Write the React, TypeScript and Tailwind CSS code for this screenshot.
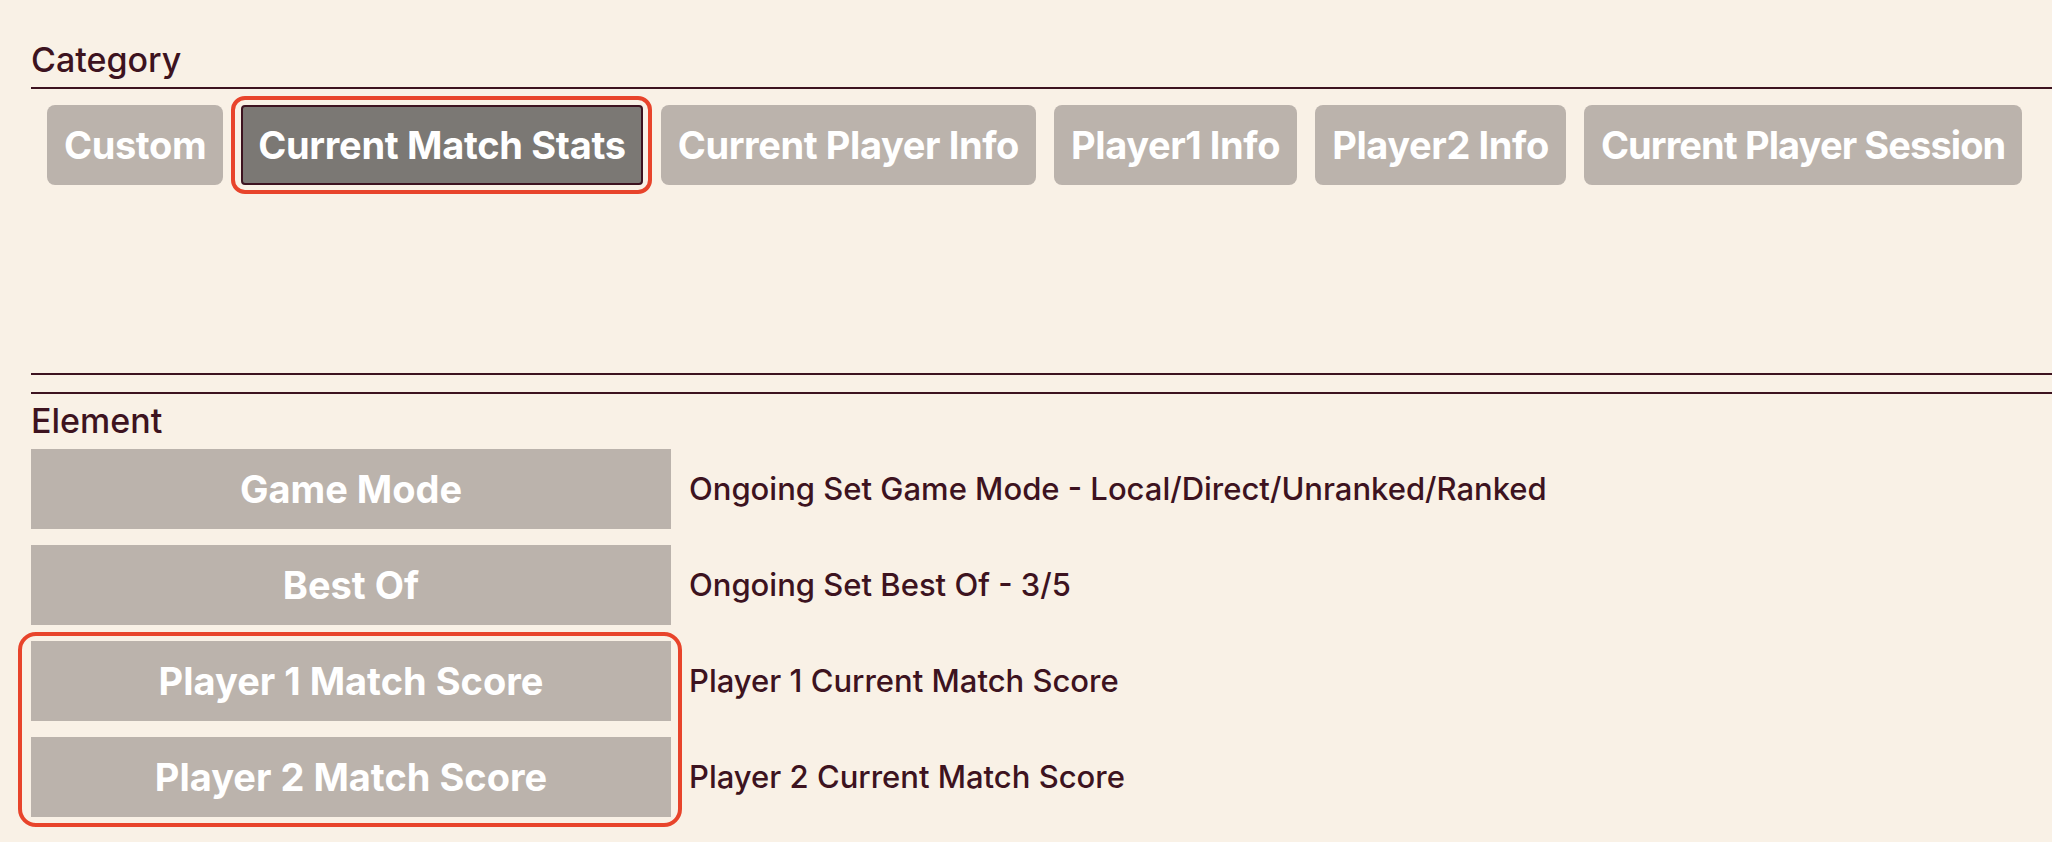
import React from "react";

const categories = [
  "Custom",
  "Current Match Stats",
  "Current Player Info",
  "Player1 Info",
  "Player2 Info",
  "Current Player Session",
];

const elements = [
  { name: "Game Mode", desc: "Ongoing Set Game Mode - Local/Direct/Unranked/Ranked" },
  { name: "Best Of", desc: "Ongoing Set Best Of - 3/5" },
];

const highlighted = [
  { name: "Player 1 Match Score", desc: "Player 1 Current Match Score" },
  { name: "Player 2 Match Score", desc: "Player 2 Current Match Score" },
];

function Row({ name, desc }: { name: string; desc: string }) {
  return (
    <div className="flex items-center gap-[18px]">
      <div className="flex h-[80px] w-[640px] shrink-0 items-center justify-center bg-[#bbb3ac] text-[38px] font-bold text-white">
        {name}
      </div>
      <div className="text-[31px] font-medium text-[#3d1320]">{desc}</div>
    </div>
  );
}

export default function App() {
  return (
    <div
      className="min-h-[842px] w-full bg-[#f9f1e6] pl-[31px] pt-[39px] text-[#3d1320]"
      style={{ fontFamily: "Inter, 'Noto Sans', sans-serif" }}
    >
      <div className="text-[34px] font-medium leading-[42px]">Category</div>
      <div className="mt-[6px] h-[288px] border-y-2 border-[#3d1320] pl-[16px] pt-[16px]">
        <div className="flex gap-[18px] whitespace-nowrap">
          {categories.map((c, i) =>
            i === 1 ? (
              <div key={c} className="relative">
                <div className="flex h-[80px] items-center rounded-[4px] border-2 border-[#3d1320] bg-[#7b7874] px-[15px] text-[38px] font-bold tracking-[-0.3px] text-white">
                  {c}
                </div>
                <span className="pointer-events-none absolute -bottom-[9px] -left-[10px] -right-[9px] -top-[9px] rounded-[14px] border-4 border-[#e8442b]" />
              </div>
            ) : (
              <div
                key={c}
                className={
                  i === 5
                    ? "flex h-[80px] items-center rounded-[8px] bg-[#bbb3ac] px-[17px] text-[38px] font-bold tracking-[-0.9px] text-white"
                    : "flex h-[80px] items-center rounded-[8px] bg-[#bbb3ac] px-[17px] text-[38px] font-bold tracking-[-0.4px] text-white"
                }
              >
                {c}
              </div>
            )
          )}
        </div>
      </div>
      <div className="mt-[17px] border-t-2 border-[#3d1320] pt-[6px]">
        <div className="text-[34px] font-medium leading-[42px]">Element</div>
        <div className="mt-[7px] flex flex-col gap-4">
          {elements.map((e) => (
            <Row key={e.name} {...e} />
          ))}
          <div className="relative flex flex-col gap-4">
            {highlighted.map((e) => (
              <Row key={e.name} {...e} />
            ))}
            <span className="pointer-events-none absolute -left-[13px] -top-[9px] h-[195px] w-[664px] rounded-[18px] border-[4.5px] border-[#e8442b]" />
          </div>
        </div>
      </div>
    </div>
  );
}
